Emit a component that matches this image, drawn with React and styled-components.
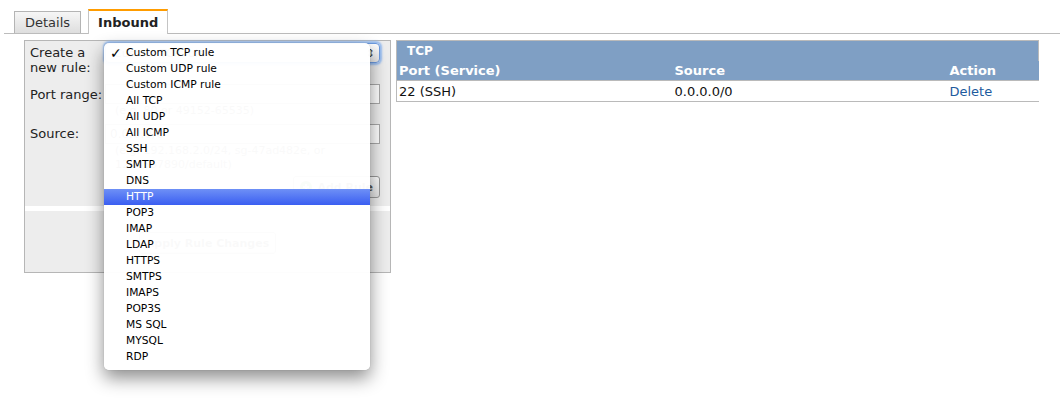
import React from 'react';
import styled, { createGlobalStyle, css } from 'styled-components';

const GlobalStyle = createGlobalStyle`
  body {
    margin: 0;
    background: #ffffff;
    font-family: 'DejaVu Sans', Verdana, sans-serif;
    font-size: 13px;
    color: #222;
  }
`;

const RULES = [
  'Custom TCP rule', 'Custom UDP rule', 'Custom ICMP rule', 'All TCP', 'All UDP',
  'All ICMP', 'SSH', 'SMTP', 'DNS', 'HTTP', 'POP3', 'IMAP', 'LDAP', 'HTTPS',
  'SMTPS', 'IMAPS', 'POP3S', 'MS SQL', 'MYSQL', 'RDP',
];

const App = () => {
  return (
    <>
      <GlobalStyle />
      <Page>
        <TabBar>
          <Tab>Details</Tab>
          <Tab active>Inbound</Tab>
        </TabBar>
        <Content>
          <RulePanel>
            <Form>
              <Row>
                <Label top={3}>Create a<br />new rule:</Label>
                <Control>
                  <SelectWrap>
                    <Select>
                      <span>Custom TCP rule</span>
                      <Arrows>⇕</Arrows>
                    </Select>
                    <Menu>
                      {RULES.map((rule, i) => (
                        <MenuItem key={rule} selected={i === 9}>
                          <Check>{i === 0 ? '✓' : ''}</Check>
                          {rule}
                        </MenuItem>
                      ))}
                    </Menu>
                  </SelectWrap>
                </Control>
              </Row>
              <Row gap={8}>
                <Label top={3}>Port range:</Label>
                <Control>
                  <Input />
                  <Hint>(e.g. 80 or 49152-65535)</Hint>
                </Control>
              </Row>
              <Row gap={6}>
                <Label top={2}>Source:</Label>
                <Control>
                  <Input defaultValue="0.0.0.0/0" />
                  <Hint>(e.g. 192.168.2.0/24, sg-47ad482e, or<br />1234567890/default)</Hint>
                </Control>
              </Row>
              <ButtonRow>
                <Button>
                  <PlusIcon viewBox="0 0 12 12">
                    <circle cx="6" cy="6" r="6" fill="#4caf3c" />
                    <path d="M6 3v6M3 6h6" stroke="#fff" strokeWidth="2" />
                  </PlusIcon>
                  Add Rule
                </Button>
              </ButtonRow>
            </Form>
            <Stripe />
            <Footer>
              <Button>Apply Rule Changes</Button>
            </Footer>
          </RulePanel>
          <RuleTable>
            <colgroup>
              <col style={{ width: 276 }} />
              <col style={{ width: 275 }} />
              <col />
            </colgroup>
            <thead>
              <tr>
                <Caption colSpan={3}>TCP</Caption>
              </tr>
              <tr>
                <Th>Port (Service)</Th>
                <Th>Source</Th>
                <Th>Action</Th>
              </tr>
            </thead>
            <tbody>
              <tr>
                <Td>22 (SSH)</Td>
                <Td>0.0.0.0/0</Td>
                <Td><Link href="#">Delete</Link></Td>
              </tr>
            </tbody>
          </RuleTable>
        </Content>
      </Page>
    </>
  );
};

export default App;

const Page = styled.div`
  box-sizing: border-box;
  height: 400px;
  padding: 9px 4px 0 4px;
  width: 1064px;
`;

const TabBar = styled.div`
  display: flex;
  align-items: flex-end;
  gap: 7px;
  height: 24px;
  padding-left: 10px;
  border-bottom: 1px solid #bcbcbc;
`;

const Tab = styled.div`
  box-sizing: border-box;
  height: 22px;
  padding: 0 10px;
  display: flex;
  align-items: center;
  border: 1px solid #b4b4b4;
  border-bottom: none;
  background: linear-gradient(#f6f6f6, #dedede);
  color: #333;
  font-size: 13px;
  ${({ active }) =>
    active &&
    css`
      height: 25px;
      margin-bottom: -1px;
      padding: 0 9px;
      border-top: 2px solid #ff9c00;
      border-color: #ff9c00 #c4c4c4 transparent #c4c4c4;
      background: #ffffff;
      font-weight: bold;
      color: #222;
    `};
`;

const Content = styled.div`
  display: flex;
  align-items: flex-start;
  gap: 5px;
  margin-top: 6px;
  padding-left: 20px;
`;

const RulePanel = styled.div`
  box-sizing: border-box;
  width: 367px;
  height: 233px;
  border: 1px solid #b6b6b6;
  background: #ededed;
  display: flex;
  flex-direction: column;
`;

const Form = styled.div`
  padding: 1px 10px 0 5px;
  height: 163px;
`;

const Row = styled.div`
  display: flex;
  margin-top: ${({ gap }) => gap || 0}px;
`;

const Label = styled.div`
  width: 75px;
  flex-shrink: 0;
  padding-top: ${({ top }) => top}px;
  line-height: 15px;
  font-size: 13px;
  color: #222;
`;

const Control = styled.div`
  flex: 1;
  display: flex;
  flex-direction: column;
`;

const SelectWrap = styled.div`
  position: relative;
  height: 34px;
`;

const Select = styled.div`
  box-sizing: border-box;
  height: 20px;
  margin-top: 1px;
  border: 1px solid #6d9be0;
  border-radius: 4px;
  box-shadow: 0 0 2px 2px #98bdf0;
  background: linear-gradient(#ffffff, #e8e8e8);
  display: flex;
  align-items: center;
  justify-content: space-between;
  padding: 0 4px 0 8px;
  font-size: 11px;
`;

const Arrows = styled.span`
  font-size: 11px;
  color: #333;
`;

const Menu = styled.div`
  position: absolute;
  top: 1px;
  left: -1px;
  width: 266px;
  box-sizing: border-box;
  padding: 2px 0 5px 0;
  border-radius: 5px;
  background: rgba(255, 255, 255, 0.97);
  box-shadow: 0 8px 18px rgba(0, 0, 0, 0.45), 0 0 1px rgba(0, 0, 0, 0.3);
  z-index: 10;
`;

const MenuItem = styled.div`
  height: 16px;
  line-height: 16px;
  display: flex;
  align-items: center;
  font-size: 10.7px;
  color: #000;
  ${({ selected }) =>
    selected &&
    css`
      background: linear-gradient(#6e90f6, #3a5ef1);
      color: #ffffff;
    `};
`;

const Check = styled.span`
  width: 22px;
  padding-left: 6px;
  box-sizing: border-box;
  font-size: 14px;
`;

const Input = styled.input`
  box-sizing: border-box;
  height: 20px;
  width: 100%;
  border: 1px solid #a9a9a9;
  background: #ffffff;
  font-family: 'DejaVu Sans', Verdana, sans-serif;
  font-size: 12px;
  padding: 0 4px;
  color: #333;
`;

const Hint = styled.div`
  font-size: 11px;
  line-height: 14px;
  padding-left: 10px;
  color: #555;
`;

const ButtonRow = styled.div`
  display: flex;
  justify-content: flex-end;
  margin-top: 4px;
`;

const Button = styled.button`
  box-sizing: border-box;
  height: 22px;
  display: flex;
  align-items: center;
  gap: 5px;
  padding: 0 6px;
  border: 1px solid #9a9a9a;
  border-radius: 3px;
  background: linear-gradient(#ffffff, #e2e2e2);
  font-family: 'DejaVu Sans', Verdana, sans-serif;
  font-size: 11px;
  font-weight: bold;
  color: #555;
`;

const PlusIcon = styled.svg`
  width: 12px;
  height: 12px;
`;

const Stripe = styled.div`
  height: 5px;
  background: #ffffff;
  margin-top: 1px;
`;

const Footer = styled.div`
  flex: 1;
  display: flex;
  justify-content: center;
  padding-top: 21px;
`;

const RuleTable = styled.table`
  width: 643px;
  table-layout: fixed;
  border-collapse: collapse;
  font-size: 13px;
`;

const Caption = styled.th`
  height: 20px;
  padding: 0 0 0 10px;
  text-align: left;
  background: #7f9fc4;
  color: #ffffff;
  font-size: 12px;
  border: 1px solid #bababa;
  border-bottom: none;
`;

const Th = styled.th`
  height: 19px;
  padding: 0 2px;
  text-align: left;
  background: #7f9fc4;
  color: #ffffff;
  font-weight: bold;
  border-bottom: 1px solid #bababa;
  &:first-child {
    border-left: 1px solid #bababa;
  }
`;

const Td = styled.td`
  height: 20px;
  padding: 0 2px;
  color: #111;
  border-bottom: 1px solid #bababa;
  &:first-child {
    border-left: 1px solid #bababa;
  }
`;

const Link = styled.a`
  color: #1d5b9e;
  text-decoration: none;
`;
